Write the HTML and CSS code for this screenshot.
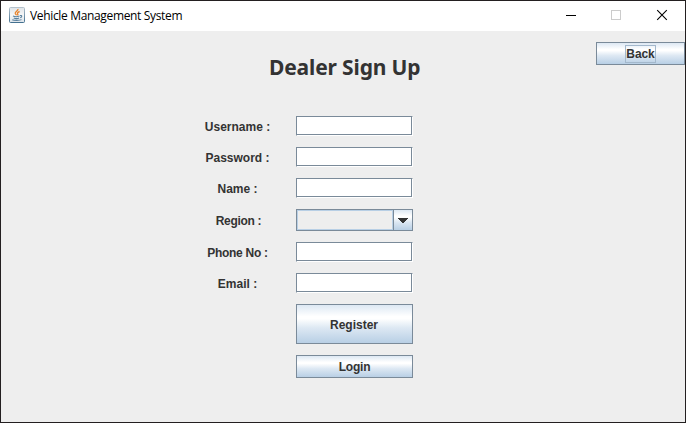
FILE: index.html
```html
<!DOCTYPE html>
<html lang="en">
<head>
<meta charset="utf-8">
<title>Vehicle Management System</title>
<link rel="stylesheet" href="styles.css">
</head>
<body>
<div class="window">
  <header class="titlebar">
    <svg class="app-icon" width="16" height="16" viewBox="0 0 16 16">
      <defs>
        <linearGradient id="tile" x1="0" y1="0" x2="0" y2="1"><stop offset="0" stop-color="#b4c2cd"/><stop offset="1" stop-color="#43708f"/></linearGradient>
        <linearGradient id="face" x1="0" y1="0" x2="0" y2="1"><stop offset="0" stop-color="#dfe4e8"/><stop offset=".5" stop-color="#f6f7f8"/><stop offset="1" stop-color="#dce3e9"/></linearGradient>
      </defs>
      <rect x=".5" y=".5" width="15" height="15" rx="1" fill="url(#face)" stroke="url(#tile)"/>
      <path d="M8.900 2c.5 2-3 2.600-2.600 4.400.2.800 1 1.300 1.300 1.900M10.600 4.500C9 5.200 8 5.900 8.700 6.900c.4.500.1 1-.3 1.400" fill="none" stroke="#e8832c" stroke-width="1.400"/>
      <path d="M4 9c1.500.7 5 .6 6.500.1M4.800 11c1.300.6 4 .6 5.300 0M3.300 12.700c1.500.9 7.500.9 9.200-.1M11 8.600c2.400-.7 2.200 1.500.2 2.200" fill="none" stroke="#5b819e" stroke-width="1.100"/>
    </svg>
    <span class="caption">Vehicle Management System</span>
    <div class="controls">
      <svg width="46" height="30" viewBox="0 0 46 30"><path d="M19 14.500h10" stroke="#000"/></svg>
      <svg width="46" height="30" viewBox="0 0 46 30"><rect x="18.500" y="9.500" width="9" height="9" fill="none" stroke="#ccc"/></svg>
      <svg width="46" height="30" viewBox="0 0 46 30"><path d="M18.200 9.200l9.600 9.600M27.800 9.200l-9.600 9.600" stroke="#000" stroke-width="1.100" fill="none"/></svg>
    </div>
  </header>
  <main class="content">
    <button class="button back"><span class="focus">Back</span></button>
    <h1 class="heading">Dealer Sign Up</h1>
    <form class="form">
      <label class="label" for="username">Username :</label><input class="field" id="username">
      <label class="label" for="password">Password :</label><input class="field" id="password" type="password">
      <label class="label" for="name">Name :</label><input class="field" id="name">
      <span class="label region">Region :</span>
      <div class="combo">
        <div class="combo-value"></div>
        <div class="combo-arrow"><svg width="10" height="5" viewBox="0 0 10 5" shape-rendering="crispEdges"><path d="M0 0h10v1H9v1H8v1H7v1H6v1H4V4H3V3H2V2H1V1H0z" fill="#333"/></svg></div>
      </div>
      <label class="label phone" for="phone">Phone No :</label><input class="field" id="phone">
      <label class="label" for="email">Email :</label><input class="field" id="email">
      <button class="button register" type="button">Register</button>
      <button class="button login" type="button">Login</button>
    </form>
  </main>
</div>
</body>
</html>
```
FILE: styles.css
```css
* { box-sizing: border-box; }
body { margin: 0; }
.window {
  width: 686px;
  height: 423px;
  border: 1px solid #231f20;
  background: #eee;
  overflow: hidden;
  color: #333;
  font: bold 12px/14px "Liberation Sans", Arial, sans-serif;
}
.titlebar {
  display: flex;
  height: 30px;
  padding-left: 8px;
  background: #fff;
}
.app-icon { margin-top: 6px; }
.caption {
  margin-left: 5px;
  color: #000;
  font: 12px/29px "Open Sans", "Noto Sans", sans-serif;
  letter-spacing: -0.34px;
  white-space: nowrap;
}
.controls { display: flex; margin-left: auto; }
.content { display: flex; flex-direction: column; padding-top: 11px; }
.button {
  display: flex;
  align-items: center;
  justify-content: center;
  padding: 0;
  border: 1px solid #7a8a99;
  border-radius: 0;
  background: linear-gradient(#dde8f3 0%, #fff 30%, #fff 36%, #dde8f3 60%, #b8cfe5 100%);
  color: #333;
  font: inherit;
}
.back { align-self: flex-end; width: 89px; height: 23px; }
.focus {
  width: 31px;
  height: 18px;
  border: 1px solid #a3b8cc;
  line-height: 17px;
  letter-spacing: -0.1px;
}
.heading {
  height: 30px;
  margin: -12px 0 33px 268px;
  font: bold 21px/29px "Noto Sans", "Open Sans", sans-serif;
  letter-spacing: -0.15px;
  white-space: nowrap;
}
.form {
  display: grid;
  grid-template-columns: 67px 117px;
  column-gap: 25px;
  row-gap: 11px;
  margin-left: 203px;
}
.label { align-self: center; justify-self: center; padding-top: 2px; white-space: nowrap; }
.region { padding-left: 2px; letter-spacing: -0.3px; }
.phone { letter-spacing: -0.3px; }
.field {
  width: 117px;
  height: 20px;
  padding: 0 2px;
  border: 1px solid;
  border-color: #7a8a99 #fff #fff #7a8a99;
  outline: none;
  background: #fff;
  box-shadow: inset -1px -1px #7a8a99;
}
.combo {
  display: flex;
  height: 22px;
  border: 1px solid #7a8a99;
}
.combo-value { flex: 1; border: 1px solid #b8cfe5; }
.combo-arrow {
  display: flex;
  align-items: center;
  justify-content: center;
  width: 20px;
  margin-right: -1px;
  border-left: 1px solid #7a8a99;
  border-right: 1px solid #7a8a99;
  background: linear-gradient(#dde8f3, #fff 30%, #fff 36%, #dde8f3 60%, #b8cfe5);
}
.register, .login { grid-column: 2; }
.register { height: 40px; padding: 2px 1px 0 0; }
.login { height: 23px; letter-spacing: -0.2px; }
```
